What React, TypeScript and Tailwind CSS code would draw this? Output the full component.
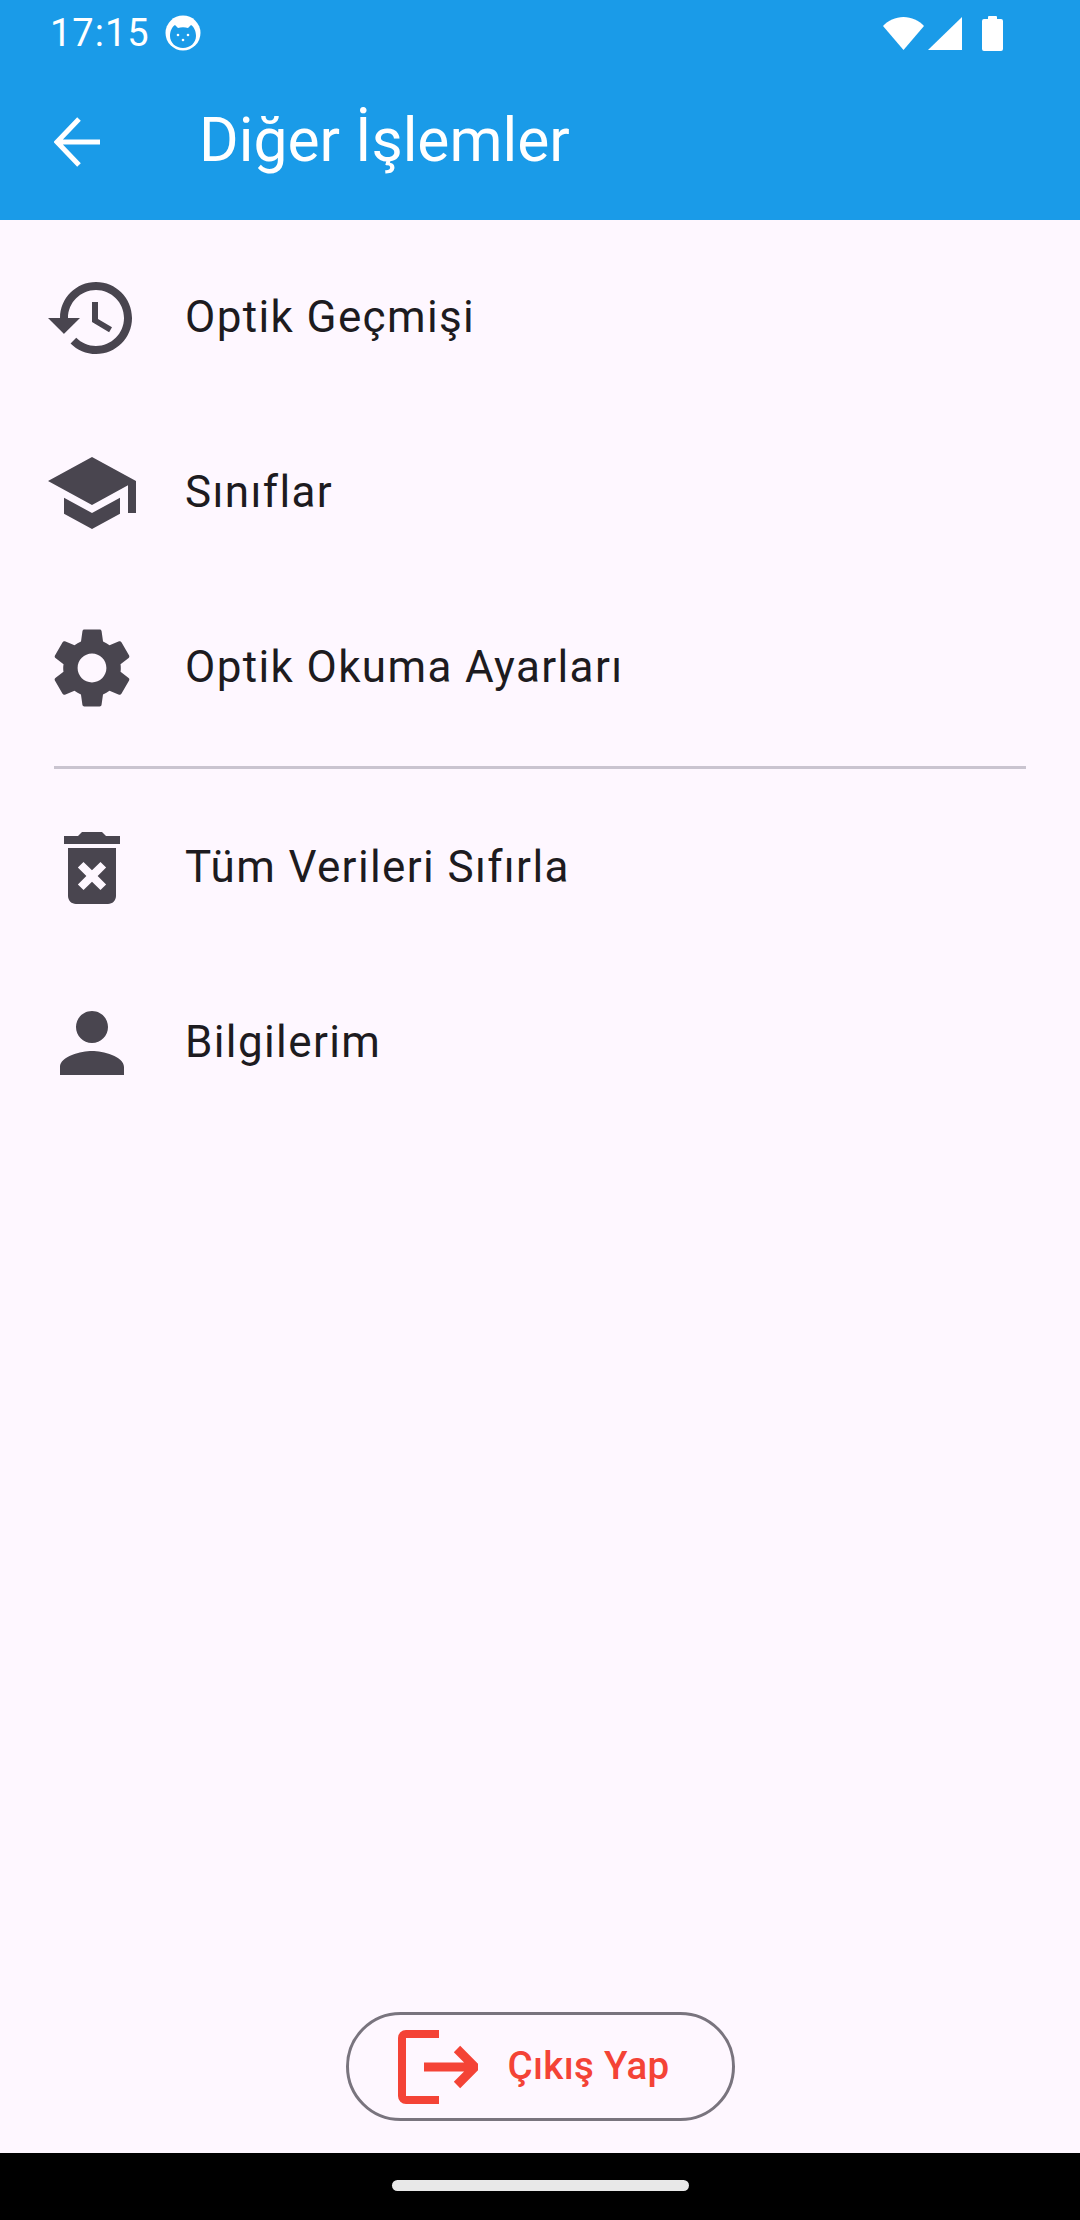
// App.tsx
import React from "react";

const ICONS = {
  history:
    "M13 3c-4.97 0-9 4.03-9 9H1l3.89 3.89.07.14L9 12H6c0-3.87 3.13-7 7-7s7 3.13 7 7-3.13 7-7 7c-1.93 0-3.68-.79-4.94-2.06l-1.42 1.42C8.27 19.99 10.51 21 13 21c4.97 0 9-4.03 9-9s-4.03-9-9-9zm-1 5v5l4.28 2.54.72-1.21-3.5-2.08V8H12z",
  school:
    "M5 13.18v4L12 21l7-3.82v-4L12 17l-7-3.82zM12 3 1 9l11 6 9-4.91V17h2V9L12 3z",
  settings:
    "M19.14 12.94c.04-.3.06-.61.06-.94 0-.32-.02-.64-.07-.94l2.03-1.58c.18-.14.23-.41.12-.61l-1.92-3.32c-.12-.22-.37-.29-.59-.22l-2.39.96c-.5-.38-1.03-.7-1.62-.94l-.36-2.54c-.04-.24-.24-.41-.48-.41h-3.84c-.24 0-.43.17-.47.41l-.36 2.54c-.59.24-1.13.57-1.62.94l-2.39-.96c-.22-.08-.47 0-.59.22L2.74 8.87c-.12.21-.08.47.12.61l2.03 1.58c-.05.3-.09.63-.09.94s.02.64.07.94l-2.03 1.58c-.18.14-.23.41-.12.61l1.92 3.32c.12.22.37.29.59.22l2.39-.96c.5.38 1.03.7 1.62.94l.36 2.54c.05.24.24.41.48.41h3.84c.24 0 .44-.17.47-.41l.36-2.54c.59-.24 1.13-.56 1.62-.94l2.39.96c.22.08.47 0 .59-.22l1.92-3.32c.12-.22.07-.47-.12-.61l-2.01-1.58zM12 15.6c-1.98 0-3.6-1.62-3.6-3.6s1.62-3.6 3.6-3.6 3.6 1.62 3.6 3.6-1.62 3.6-3.6 3.6z",
  trash:
    "M6 19c0 1.1.9 2 2 2h8c1.1 0 2-.9 2-2V7H6v12zm2.46-7.12 1.41-1.41L12 12.59l2.12-2.12 1.41 1.41L13.41 14l2.12 2.12-1.41 1.41L12 15.41l-2.12 2.12-1.41-1.41L10.59 14l-2.13-2.12zM15.5 4l-1-1h-5l-1 1H5v2h14V4z",
  person:
    "M12 12c2.21 0 4-1.79 4-4s-1.79-4-4-4-4 1.79-4 4 1.79 4 4 4zm0 2c-2.67 0-8 1.34-8 4v2h16v-2c0-2.66-5.33-4-8-4z",
};

const Row: React.FC<{ icon: string; label: string }> = ({ icon, label }) => (
  <div className="flex h-[175px] items-center pl-[44px]">
    <svg viewBox="0 0 24 24" className="h-[96px] w-[96px] shrink-0 fill-[#49454F]">
      <path d={icon} />
    </svg>
    <span className="mb-[2px] ml-[45px] text-[44px] leading-none tracking-[1.375px] text-[#1D1B20]">
      {label}
    </span>
  </div>
);

export default function App() {
  return (
    <div className="flex h-[2220px] w-[1080px] flex-col overflow-hidden bg-[#FEF7FF] font-['Roboto',sans-serif]">
      {/* status bar + app bar */}
      <header className="h-[220px] shrink-0 bg-[#1A9BE8] text-white">
        <div className="flex h-[66px] items-center justify-between pl-[50px] pr-[77px]">
          <div className="flex items-center gap-[15px]">
            <span className="text-[38px] leading-none tracking-[1px]">17:15</span>
            <svg viewBox="0 0 36 38" className="h-[38px] w-[36px]">
              <circle cx="18" cy="19" r="17.5" fill="#fff" />
              <path
                d="M5 22c0-5 2-9 5-11l3 3c3-1 7-1 10 0l3-3c3 2 5 6 5 11 0 7-6 12-13 12S5 29 5 22z"
                fill="#1A9BE8"
              />
              <circle cx="13" cy="21" r="1.3" fill="#fff" />
              <circle cx="23" cy="21" r="1.3" fill="#fff" />
              <circle cx="18" cy="26" r="1.3" fill="#fff" />
            </svg>
          </div>
          <div className="flex items-center gap-[20px]">
            <div className="flex items-center gap-[4px]">
              <svg viewBox="0 0 41 33" className="h-[33px] w-[41px]">
                <path d="M0 9C5 3.5 12.5 0 20.5 0S36 3.500 41 9L20.500 33z" fill="#fff" />
              </svg>
              <svg viewBox="0 0 34 33" className="h-[33px] w-[34px]">
                <path d="M34 0v33H0z" fill="#fff" />
              </svg>
            </div>
            <svg viewBox="0 0 21 36" className="h-[36px] w-[21px]">
              <path
                d="M6 2a1 1 0 0 1 1-1h7a1 1 0 0 1 1 1v2h4a2 2 0 0 1 2 2v28a2 2 0 0 1-2 2H2a2 2 0 0 1-2-2V6a2 2 0 0 1 2-2h4z"
                fill="#fff"
              />
            </svg>
          </div>
        </div>
        <div className="flex h-[154px] items-center pb-[3px] pl-[54px]">
          <svg
            viewBox="0 0 46 50"
            className="h-[50px] w-[46px] fill-none stroke-white stroke-[5px]"
          >
            <path d="M46 25H4M25 2 3 25l22 23" />
          </svg>
          <h1 className="ml-[99px] text-[60.5px] font-normal leading-none text-white">
            Diğer İşlemler
          </h1>
        </div>
      </header>

      {/* menu */}
      <main className="flex-1 pt-[10px]">
        <Row icon={ICONS.history} label="Optik Geçmişi" />
        <Row icon={ICONS.school} label="Sınıflar" />
        <Row icon={ICONS.settings} label="Optik Okuma Ayarları" />
        <div className="mx-[54px] my-[11px] h-[3px] bg-[#CAC4D0]" />
        <Row icon={ICONS.trash} label="Tüm Verileri Sıfırla" />
        <Row icon={ICONS.person} label="Bilgilerim" />
      </main>

      {/* logout */}
      <div className="flex shrink-0 justify-center pb-[32px]">
        <button className="flex h-[109px] w-[389px] items-center rounded-full border-[3px] border-[#79747E] pl-[49px]">
          <svg viewBox="0 0 80 74" className="h-[74px] w-[80px] shrink-0 fill-none stroke-[#F44336]">
            <path d="M41 4H8a4 4 0 0 0-4 4v58a4 4 0 0 0 4 4h33" strokeWidth="8" />
            <path d="M26 37h50M59 19l18 18-18 18" strokeWidth="9" />
          </svg>
          <span className="ml-[30px] text-[38.5px] font-medium leading-none tracking-[0.3px] text-[#F44336]">
            Çıkış Yap
          </span>
        </button>
      </div>

      {/* gesture bar */}
      <div className="flex h-[67px] shrink-0 items-center justify-center bg-black pb-[2px]">
        <div className="h-[11px] w-[297px] rounded-full bg-[#E8E8E8]" />
      </div>
    </div>
  );
}
